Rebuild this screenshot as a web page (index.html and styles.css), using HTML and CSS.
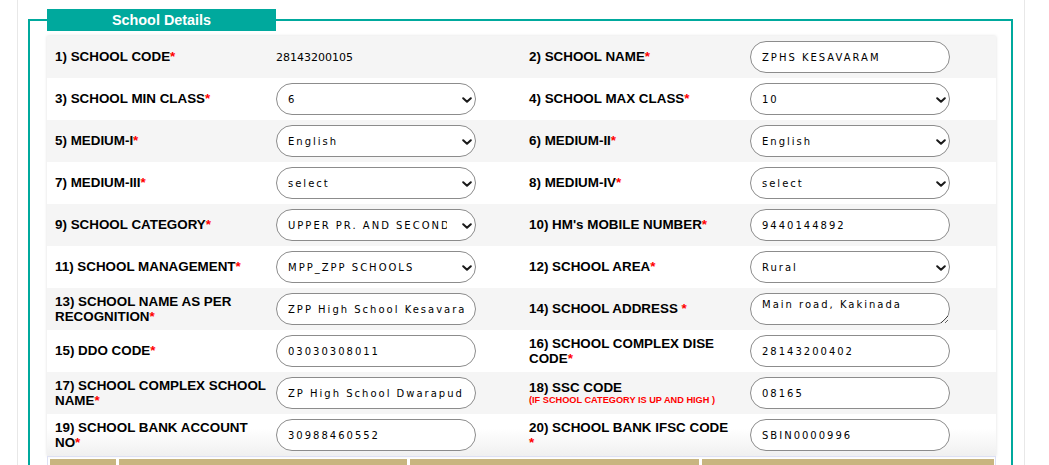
FILE: index.html
```html
<!DOCTYPE html>
<html lang="en">
<head>
<meta charset="utf-8">
<title>School Details</title>
<link rel="stylesheet" href="styles.css">
</head>
<body>
<div class="page">
  <fieldset class="box">
    <legend class="box-title"><span class="box-title-text">School Details</span></legend>
    <div class="form">
      <div class="row">
        <div class="lbl">1) SCHOOL CODE<span class="req">*</span></div>
        <div class="val"><span class="plain">28143200105</span></div>
        <div class="lbl">2) SCHOOL NAME<span class="req">*</span></div>
        <div class="val"><input class="field" type="text" value="ZPHS KESAVARAM"></div>
      </div>
      <div class="row">
        <div class="lbl">3) SCHOOL MIN CLASS<span class="req">*</span></div>
        <div class="val"><div class="sel"><select class="field select"><option>6</option></select><svg class="chev" viewBox="0 0 10 6" width="10" height="6"><polyline points="1.2,1.2 5,4.8 8.8,1.2"/></svg></div></div>
        <div class="lbl">4) SCHOOL MAX CLASS<span class="req">*</span></div>
        <div class="val"><div class="sel"><select class="field select"><option>10</option></select><svg class="chev" viewBox="0 0 10 6" width="10" height="6"><polyline points="1.2,1.2 5,4.8 8.8,1.2"/></svg></div></div>
      </div>
      <div class="row">
        <div class="lbl">5) MEDIUM-I<span class="req">*</span></div>
        <div class="val"><div class="sel"><select class="field select"><option>English</option></select><svg class="chev" viewBox="0 0 10 6" width="10" height="6"><polyline points="1.2,1.2 5,4.8 8.8,1.2"/></svg></div></div>
        <div class="lbl">6) MEDIUM-II<span class="req">*</span></div>
        <div class="val"><div class="sel"><select class="field select"><option>English</option></select><svg class="chev" viewBox="0 0 10 6" width="10" height="6"><polyline points="1.2,1.2 5,4.8 8.8,1.2"/></svg></div></div>
      </div>
      <div class="row">
        <div class="lbl">7) MEDIUM-III<span class="req">*</span></div>
        <div class="val"><div class="sel"><select class="field select"><option>select</option></select><svg class="chev" viewBox="0 0 10 6" width="10" height="6"><polyline points="1.2,1.2 5,4.8 8.8,1.2"/></svg></div></div>
        <div class="lbl">8) MEDIUM-IV<span class="req">*</span></div>
        <div class="val"><div class="sel"><select class="field select"><option>select</option></select><svg class="chev" viewBox="0 0 10 6" width="10" height="6"><polyline points="1.2,1.2 5,4.8 8.8,1.2"/></svg></div></div>
      </div>
      <div class="row">
        <div class="lbl">9) SCHOOL CATEGORY<span class="req">*</span></div>
        <div class="val"><div class="sel"><select class="field select"><option>UPPER PR. AND SECONDARY</option></select><svg class="chev" viewBox="0 0 10 6" width="10" height="6"><polyline points="1.2,1.2 5,4.8 8.8,1.2"/></svg></div></div>
        <div class="lbl">10) HM's MOBILE NUMBER<span class="req">*</span></div>
        <div class="val"><input class="field" type="text" value="9440144892"></div>
      </div>
      <div class="row">
        <div class="lbl">11) SCHOOL MANAGEMENT<span class="req">*</span></div>
        <div class="val"><div class="sel"><select class="field select"><option>MPP_ZPP SCHOOLS</option></select><svg class="chev" viewBox="0 0 10 6" width="10" height="6"><polyline points="1.2,1.2 5,4.8 8.8,1.2"/></svg></div></div>
        <div class="lbl">12) SCHOOL AREA<span class="req">*</span></div>
        <div class="val"><div class="sel"><select class="field select"><option>Rural</option></select><svg class="chev" viewBox="0 0 10 6" width="10" height="6"><polyline points="1.2,1.2 5,4.8 8.8,1.2"/></svg></div></div>
      </div>
      <div class="row">
        <div class="lbl">13) SCHOOL NAME AS PER RECOGNITION<span class="req">*</span></div>
        <div class="val"><input class="field" type="text" value="ZPP High School Kesavaram"></div>
        <div class="lbl">14) SCHOOL ADDRESS <span class="req">*</span></div>
        <div class="val"><textarea class="field area">Main road, Kakinada</textarea></div>
      </div>
      <div class="row">
        <div class="lbl">15) DDO CODE<span class="req">*</span></div>
        <div class="val"><input class="field" type="text" value="03030308011"></div>
        <div class="lbl">16) SCHOOL COMPLEX DISE CODE<span class="req">*</span></div>
        <div class="val"><input class="field" type="text" value="28143200402"></div>
      </div>
      <div class="row">
        <div class="lbl">17) SCHOOL COMPLEX SCHOOL NAME<span class="req">*</span></div>
        <div class="val"><input class="field" type="text" value="ZP High School Dwarapudi"></div>
        <div class="lbl">18) SSC CODE<span class="note">(IF SCHOOL CATEGORY IS UP AND HIGH )</span></div>
        <div class="val"><input class="field" type="text" value="08165"></div>
      </div>
      <div class="row row-last">
        <div class="lbl">19) SCHOOL BANK ACCOUNT NO<span class="req">*</span></div>
        <div class="val"><input class="field" type="text" value="30988460552"></div>
        <div class="lbl">20) SCHOOL BANK IFSC CODE<br><span class="req">*</span></div>
        <div class="val"><input class="field" type="text" value="SBIN0000996"></div>
      </div>
    </div>
    <div class="sub">
      <div class="sub-cell"></div>
      <div class="sub-cell"></div>
      <div class="sub-cell"></div>
      <div class="sub-cell"></div>
    </div>
  </fieldset>
</div>
</body>
</html>
```
FILE: styles.css
```css
html, body {
  margin: 0;
  padding: 0;
  background: #fff;
  overflow: hidden;
}

.page {
  margin-left: 17px;
  width: 985px;
  min-height: 600px;
  border-left: 1px solid #e8e8e8;
  border-right: 1px solid #e8e8e8;
  padding: 9px 11px 0 10px;
  box-sizing: content-box;
}

.box {
  margin: 0;
  border: 2px solid #00a99d;
  padding: 5px 15px 0 17px;
  min-width: 0;
}

.box-title {
  box-sizing: border-box;
  width: 229px;
  height: 22px;
  padding: 0;
  margin: 0 auto 0 0;
  background: #00a99d;
  text-align: left;
}

.box-title-text {
  display: block;
  color: #fff;
  font-family: "Liberation Sans", Arial, sans-serif;
  font-weight: bold;
  font-size: 14.4px;
  line-height: 22px;
  text-align: center;
}

.form {
  box-shadow: 0 0 3px rgba(0, 0, 0, 0.13);
}

.row {
  display: grid;
  grid-template-columns: 221px 253px 221px 254px;
  height: 42px;
  align-items: center;
  background: #fff;
}

.row:nth-child(odd) {
  background: #f5f5f5;
}

.row-last {
  background: linear-gradient(to bottom, #fff 35%, #f0f0f0 100%);
}

.lbl {
  padding-left: 8px;
  font-family: "Liberation Sans", Arial, sans-serif;
  font-weight: bold;
  font-size: 13.4px;
  line-height: 15.5px;
  color: #000;
}

.req {
  color: #f00;
}

.note {
  display: block;
  color: #f00;
  font-size: 9.2px;
  line-height: 11px;
}

.val {
  padding-left: 8px;
  display: flex;
  align-items: center;
}

.plain {
  font-family: "DejaVu Sans", Verdana, sans-serif;
  font-size: 11px;
  color: #000;
}

.field {
  box-sizing: border-box;
  width: 200px;
  height: 32px;
  margin: 0;
  border: 1px solid #8c8c8c;
  border-radius: 16px;
  background: #fff;
  padding: 0 11px;
  font-family: "DejaVu Sans", Verdana, sans-serif;
  font-size: 10px;
  letter-spacing: 2px;
  color: #000;
  outline: none;
}

.sel {
  position: relative;
  width: 200px;
  height: 32px;
}

.select {
  appearance: none;
  -webkit-appearance: none;
  padding-top: 2px;
  padding-right: 28px;
  line-height: 18px;
}

.chev {
  position: absolute;
  right: 4px;
  top: 14px;
  width: 10px;
  height: 6px;
  fill: none;
  stroke: #1a1a1a;
  stroke-width: 2;
  stroke-linecap: round;
  stroke-linejoin: round;
  pointer-events: none;
}

.area {
  padding: 4px 11px 0;
  resize: both;
  line-height: 14px;
  display: block;
}

.sub {
  display: grid;
  grid-template-columns: 66px 288px 289px 292px;
  column-gap: 3px;
  padding: 2px;
  border: 1px solid #dde0f3;
  border-bottom: none;
}

.sub-cell {
  height: 24px;
  background: #c8b580;
}
```
